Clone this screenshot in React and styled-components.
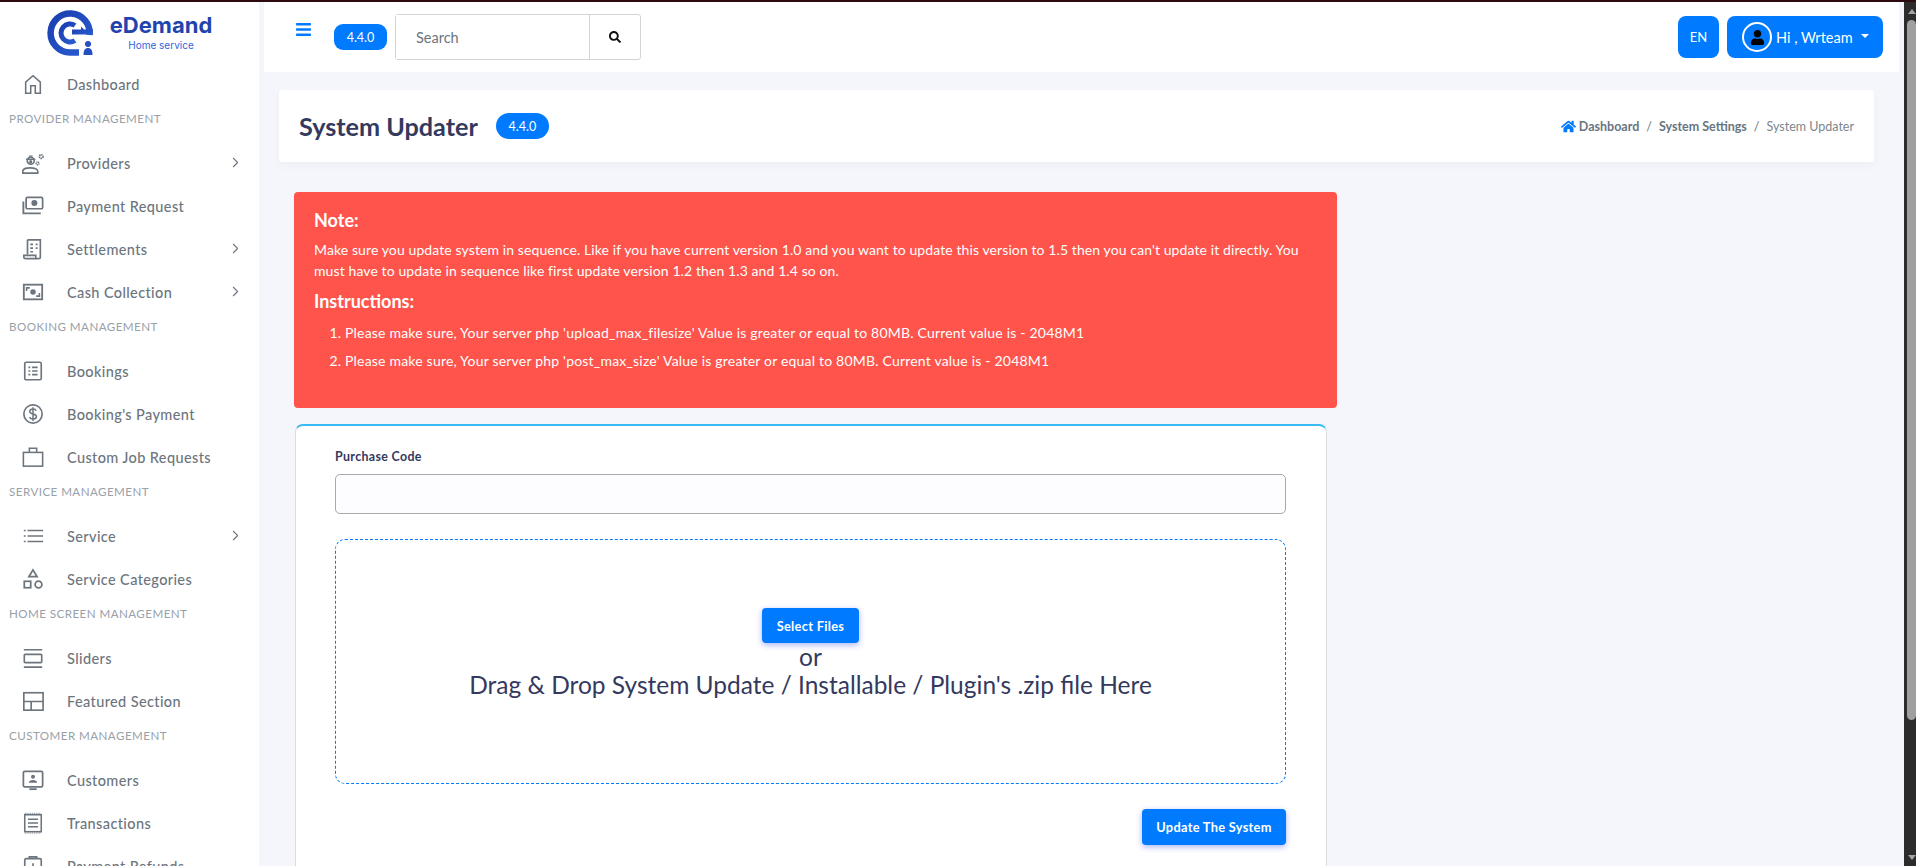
import React from "react";
import styled, { createGlobalStyle } from "styled-components";
import { ChevronRight } from "lucide-react";
import { FaBars, FaHome, FaSearch, FaUser } from "react-icons/fa";

const Global = createGlobalStyle`
html, body { margin: 0; height: 100%; overflow: hidden; }
body { font-family: Lato, "Open Sans", sans-serif; background: #f4f6fb; color: #34395e; }
* { box-sizing: border-box; }
`;

const stroke = { fill: "none", stroke: "currentColor", strokeWidth: 1.7 };

const HomeIcon = () => (
  <svg viewBox="0 0 24 24" {...stroke}><path d="M4 22V10l8-7 8 7v12h-5.500v-8h-5v8z" /></svg>
);
const ProvidersIcon = () => (
  <svg viewBox="0 0 24 24" {...stroke}>
    <circle cx="9.500" cy="9.500" r="3.800" strokeWidth="1.800" />
    <path d="M4.500 8h10M7.500 4.500h4" strokeWidth="1.600" />
    <circle cx="9.500" cy="10.500" r="1.700" fill="currentColor" stroke="none" />
    <path d="M.8 23v-2c0-2.300 3.500-3.700 8.200-3.700s8.200 1.400 8.200 3.700v2z" strokeWidth="1.800" />
    <circle cx="21" cy="5" r="2" strokeDasharray="1.500 .6" strokeWidth="1.800" />
    <circle cx="17" cy="12.500" r="1.500" strokeDasharray="1.200 .5" strokeWidth="1.600" />
  </svg>
);
const PaymentIcon = () => (
  <svg viewBox="0 0 24 24" {...stroke}>
    <rect x="4.500" y="2.500" width="18" height="12.500" rx="1.500" strokeWidth="1.900" />
    <circle cx="13.500" cy="8.700" r="3.300" fill="currentColor" stroke="none" />
    <path d="M1.500 7v13h19" strokeWidth="2" />
  </svg>
);
const SettlementIcon = () => (
  <svg viewBox="0 0 24 24" {...stroke}>
    <path d="M6 2h14v19c0 1-1 1.500-2 1.500H4c-1 0-2-.5-2-1.500v-2h13v3" strokeWidth="1.800" />
    <path d="M6 2v16M9 7h3M9 11h3M9 15h3M15 7h2M15 11h2" strokeWidth="1.800" />
  </svg>
);
const CashIcon = () => (
  <svg viewBox="0 0 24 24" {...stroke}>
    <rect x="2" y="4" width="20" height="16" strokeWidth="2" />
    <circle cx="12" cy="12" r="3" fill="currentColor" stroke="none" />
    <path d="M5 11V7.500h3.500M19 13v3.500h-3.500" />
  </svg>
);
const BookingIcon = () => (
  <svg viewBox="0 0 24 24" {...stroke}>
    <rect x="3" y="2.500" width="18" height="19" rx="1.500" strokeWidth="1.800" />
    <path d="M7 8h2M11 8h6M7 12h2M11 12h6M7 16h2M11 16h6" strokeWidth="1.800" />
  </svg>
);
const DollarIcon = () => (
  <svg viewBox="0 0 24 24" {...stroke}>
    <circle cx="12" cy="12" r="10" strokeWidth="1.800" />
    <path d="M15.500 8.500c-.5-1.500-2-2-3.500-2-2 0-3.500 1-3.500 2.700 0 3.800 7.200 1.800 7.200 5.500 0 1.700-1.700 2.700-3.700 2.700-1.700 0-3.200-.7-3.700-2.200M12 4.500v15" strokeWidth="1.600" />
  </svg>
);
const CaseIcon = () => (
  <svg viewBox="0 0 24 24" {...stroke}>
    <rect x="1.500" y="7" width="21" height="15" strokeWidth="1.700" />
    <path d="M8 7V2.500h8V7" strokeWidth="1.700" />
  </svg>
);
const ListIcon = () => (
  <svg viewBox="0 0 24 24" {...stroke}>
    <path d="M6 6h17M6 12h17M6 18h17" strokeWidth="1.800" />
    <path d="M2 6h2M2 12h2M2 18h2" strokeWidth="1.800" />
  </svg>
);
const ShapesIcon = () => (
  <svg viewBox="0 0 24 24" {...stroke}>
    <path d="M12 2l4.500 7.500h-9z" strokeWidth="1.900" />
    <rect x="2.500" y="14.500" width="7" height="7" strokeWidth="1.900" />
    <circle cx="18" cy="18" r="3.700" strokeWidth="1.900" />
  </svg>
);
const SliderIcon = () => (
  <svg viewBox="0 0 24 24" {...stroke}>
    <path d="M2 3h20M2 22h20" strokeWidth="1.800" />
    <rect x="2.500" y="8" width="19" height="9" rx="1" strokeWidth="1.800" />
  </svg>
);
const FeaturedIcon = () => (
  <svg viewBox="0 0 24 24" {...stroke}>
    <rect x="2" y="3" width="21" height="19" strokeWidth="1.800" />
    <path d="M2 12.500h21M10 12.500V22" strokeWidth="1.800" />
  </svg>
);
const CustomerIcon = () => (
  <svg viewBox="0 0 24 24" {...stroke}>
    <rect x="1.500" y="2.500" width="21" height="17" rx="1.500" strokeWidth="1.900" />
    <circle cx="12" cy="8.500" r="2.200" fill="currentColor" stroke="none" />
    <path d="M7.500 15c0-2 2-3 4.500-3s4.500 1 4.500 3z" fill="currentColor" stroke="none" />
    <path d="M8 22h8" strokeWidth="2" />
  </svg>
);
const ReceiptIcon = () => (
  <svg viewBox="0 0 24 24" {...stroke}>
    <rect x="3" y="3" width="18" height="18.500" strokeWidth="1.700" />
    <path d="M6.500 8h11M6.500 12h11M6.500 16h11" strokeWidth="1.700" />
    <path d="M3 1.500h18M3 23h18" strokeWidth="1" strokeDasharray="1 1" />
  </svg>
);
const RefundIcon = () => (
  <svg viewBox="0 0 24 24" {...stroke}>
    <rect x="3" y="4" width="18" height="18" rx="1.500" strokeWidth="1.800" />
    <path d="M8 4V2h8v2M12 9v8M8 13h8" strokeWidth="1.800" />
  </svg>
);

const menu = [
  { label: "Dashboard", icon: HomeIcon },
  { heading: "Provider Management" },
  { label: "Providers", icon: ProvidersIcon, sub: true },
  { label: "Payment Request", icon: PaymentIcon },
  { label: "Settlements", icon: SettlementIcon, sub: true },
  { label: "Cash Collection", icon: CashIcon, sub: true },
  { heading: "Booking Management" },
  { label: "Bookings", icon: BookingIcon },
  { label: "Booking's Payment", icon: DollarIcon },
  { label: "Custom Job Requests", icon: CaseIcon },
  { heading: "Service Management" },
  { label: "Service", icon: ListIcon, sub: true },
  { label: "Service Categories", icon: ShapesIcon },
  { heading: "Home Screen Management" },
  { label: "Sliders", icon: SliderIcon },
  { label: "Featured Section", icon: FeaturedIcon },
  { heading: "Customer Management" },
  { label: "Customers", icon: CustomerIcon },
  { label: "Transactions", icon: ReceiptIcon },
  { label: "Payment Refunds", icon: RefundIcon },
];

function LogoMark() {
  return (
    <svg width="46" height="46" viewBox="0 0 46 46">
      <defs>
        <linearGradient id="logoBlue" x1="0" y1="0" x2="1" y2="1">
          <stop offset="0" stopColor="#1a3eae" />
          <stop offset="1" stopColor="#2a5cd2" />
        </linearGradient>
      </defs>
      <path d="M42.500 25A19.500 19.500 0 1 0 23 42.500h9" fill="none" stroke="url(#logoBlue)" strokeWidth="6.500" />
      <path d="M28 15.500A9 9 0 1 0 28 30.500" fill="none" stroke="url(#logoBlue)" strokeWidth="5" />
      <path d="M25 19.500h9v-3l3 3h9v5H25z" fill="url(#logoBlue)" />
      <circle cx="41" cy="34" r="3" fill="#2450c0" />
      <path d="M36.500 45c0-5 1.500-7 4.500-7s4.500 2 4.500 7z" fill="#2450c0" />
    </svg>
  );
}

function Sidebar() {
  return (
    <Side>
      <Brand>
        <LogoMark />
        <BrandText>
          <BrandName>eDemand</BrandName>
          <BrandSub>Home service</BrandSub>
        </BrandText>
      </Brand>
      {menu.map((m) =>
        m.heading ? (
          <MenuHeading key={m.heading}>{m.heading}</MenuHeading>
        ) : (
          <MenuItem key={m.label}>
            <MenuIcon><m.icon /></MenuIcon>
            <MenuLabel>{m.label}</MenuLabel>
            {m.sub && <ChevronRight size={17} strokeWidth={1.500} />}
          </MenuItem>
        )
      )}
    </Side>
  );
}

function TopBar() {
  return (
    <Navbar>
      <Burger><FaBars size={17} /></Burger>
      <VersionPill>4.4.0</VersionPill>
      <SearchGroup>
        <SearchInput placeholder="Search" />
        <SearchBtn><FaSearch size={12} /></SearchBtn>
      </SearchGroup>
      <NavRight>
        <LangBtn>EN</LangBtn>
        <UserBtn>
          <Avatar><FaUser size={15} /></Avatar>
          Hi , Wrteam
          <Caret />
        </UserBtn>
      </NavRight>
    </Navbar>
  );
}

export default function App() {
  return (
    <>
      <Global />
      <Shell>
        <TopLine />
        <Frame>
          <Sidebar />
          <Page>
            <TopBar />
            <SectionHeader>
              <Title>System Updater</Title>
              <TitlePill>4.4.0</TitlePill>
              <Crumbs>
                <FaHome size={15} color="#007bff" />
                <Crumb $first>Dashboard</Crumb>
                <Sep>/</Sep>
                <Crumb>System Settings</Crumb>
                <Sep>/</Sep>
                <Crumb $muted>System Updater</Crumb>
              </Crumbs>
            </SectionHeader>
            <Body>
              <Alert>
                <AlertTitle>Note:</AlertTitle>
                <AlertText>
                  Make sure you update system in sequence. Like if you have current version 1.0 and you want to update this version to 1.5 then you can't update it directly. You must have to update in sequence like first update version 1.2 then 1.3 and 1.4 so on.
                </AlertText>
                <AlertTitle>Instructions:</AlertTitle>
                <AlertList>
                  <li>Please make sure, Your server php 'upload_max_filesize' Value is greater or equal to 80MB. Current value is - 2048M1</li>
                  <li>Please make sure, Your server php 'post_max_size' Value is greater or equal to 80MB. Current value is - 2048M1</li>
                </AlertList>
              </Alert>
              <Card>
                <FieldLabel>Purchase Code</FieldLabel>
                <CodeInput />
                <DropZone>
                  <PrimaryBtn>Select Files</PrimaryBtn>
                  <DropText>or</DropText>
                  <DropText>Drag &amp; Drop System Update / Installable / Plugin's .zip file Here</DropText>
                </DropZone>
                <CardFoot>
                  <PrimaryBtn $wide>Update The System</PrimaryBtn>
                </CardFoot>
              </Card>
            </Body>
          </Page>
          <ScrollRail>
            <RailArrow><ArrowUp /></RailArrow>
            <RailThumb />
            <RailArrow><ArrowDown /></RailArrow>
          </ScrollRail>
        </Frame>
      </Shell>
    </>
  );
}

const Shell = styled.div`
height: 100vh;
display: flex;
flex-direction: column;
overflow: hidden;
`;

const TopLine = styled.div`
height: 2px;
flex: none;
background: #2b0b0d;
`;

const Frame = styled.div`
flex: 1;
min-height: 0;
display: flex;
`;

const Side = styled.aside`
width: 259px;
flex: none;
margin-right: 5px;
background: #fff;
overflow: hidden;
`;

const Brand = styled.div`
height: 60px;
padding: 8px 0 0 47px;
display: flex;
gap: 17px;
`;

const BrandText = styled.div`
display: flex;
flex-direction: column;
align-items: center;
width: 102px;
`;

const BrandName = styled.div`
font-family: Inter, sans-serif;
font-size: 22px;
font-weight: 700;
line-height: 30px;
color: #1f44ad;
`;

const BrandSub = styled.div`
font-family: Inter, sans-serif;
font-size: 10px;
line-height: 16px;
margin-top: -3px;
color: #2f66dc;
`;

const MenuItem = styled.div`
height: 43px;
display: flex;
align-items: center;
padding: 0 15px 0 22px;
color: #6c757d;
`;

const MenuIcon = styled.span`
width: 22px;
height: 22px;
margin-right: 23px;
flex: none;
> svg { display: block; width: 100%; height: 100%; }
`;

const MenuLabel = styled.span`
flex: 1;
padding-top: 1px;
font-size: 14.5px;
font-weight: 500;
letter-spacing: 0.38px;
`;

const MenuHeading = styled.div`
height: 36px;
padding: 7px 0 0 9px;
font-size: 11.6px;
line-height: 14px;
letter-spacing: 0.45px;
text-transform: uppercase;
color: #98a0a8;
`;

const Page = styled.main`
flex: 1;
min-width: 0;
overflow: hidden;
`;

const ScrollRail = styled.div`
width: 12px;
flex: none;
display: flex;
flex-direction: column;
padding-left: 3px;
background: #2c2c2c;
`;

const RailArrow = styled.div`
height: 18px;
flex: none;
display: flex;
align-items: center;
justify-content: center;
`;

const ArrowUp = styled.span`
border-bottom: 5px solid #a3a3a3;
border-left: 4.5px solid transparent;
border-right: 4.5px solid transparent;
`;

const ArrowDown = styled(ArrowUp)`
border-bottom: 0;
border-top: 5px solid #a3a3a3;
`;

const RailThumb = styled.div`
height: 700px;
margin-bottom: auto;
background: #9f9f9f;
border-radius: 5px;
`;

const Navbar = styled.header`
height: 70px;
margin-right: 5px;
background: #fff;
display: flex;
align-items: center;
padding: 0 16px 0 31px;
`;

const Burger = styled.span`
display: flex;
color: #007bff;
margin: -16px 22px 0 0;
`;

const VersionPill = styled.span`
width: 53px;
height: 26px;
margin-right: 8px;
display: flex;
align-items: center;
justify-content: center;
background: #007bff;
color: #fff;
font-size: 12.5px;
border-radius: 9px;
`;

const SearchGroup = styled.div`
width: 246px;
height: 46px;
display: flex;
background: #fff;
border: 1px solid #d4d4d4;
border-radius: 3px;
`;

const SearchInput = styled.input`
flex: 1;
min-width: 0;
border: 0;
outline: 0;
padding: 0 20px;
font: 14.5px Lato, sans-serif;
&::placeholder { color: #6c757d; }
`;

const SearchBtn = styled.span`
width: 51px;
flex: none;
display: flex;
align-items: center;
justify-content: center;
color: #111;
border-left: 1px solid #d4d4d4;
`;

const NavRight = styled.div`
margin-left: auto;
display: flex;
gap: 8px;
`;

const LangBtn = styled.span`
width: 41px;
height: 42px;
display: flex;
align-items: center;
justify-content: center;
background: #007bff;
color: #fff;
font-size: 13px;
border-radius: 8px;
`;

const UserBtn = styled.span`
width: 156px;
height: 42px;
padding-left: 15px;
display: flex;
align-items: center;
gap: 4px;
background: #007bff;
color: #fff;
font-size: 14.5px;
border-radius: 8px;
`;

const Avatar = styled.span`
width: 30px;
height: 30px;
display: flex;
align-items: center;
justify-content: center;
border: 2px solid #fff;
border-radius: 50%;
color: #000;
`;

const Caret = styled.span`
margin-left: 4px;
margin-top: -3px;
border-top: 4.5px solid #fff;
border-left: 4.5px solid transparent;
border-right: 4.5px solid transparent;
`;

const SectionHeader = styled.section`
height: 72px;
margin: 18px 30px 0 15px;
padding: 0 20px;
display: flex;
align-items: center;
background: #fff;
border-radius: 3px;
box-shadow: 0 4px 8px rgba(0, 0, 0, 0.03);
`;

const Title = styled.h1`
margin: 0 18px 0 0;
font-size: 25.2px;
font-weight: 700;
color: #34395e;
`;

const TitlePill = styled.span`
width: 53px;
height: 26px;
display: flex;
align-items: center;
justify-content: center;
background: #007bff;
color: #fff;
font-size: 12.5px;
border-radius: 13px;
`;

const Crumbs = styled.nav`
margin-left: auto;
display: flex;
align-items: center;
font-size: 12.5px;
`;

const Crumb = styled.span`
color: ${(p) => (p.$muted ? "#7c858d" : "#6a7580")};
margin-left: ${(p) => (p.$first ? "3px" : "0")};
font-weight: ${(p) => (p.$muted ? 400 : 700)};
`;

const Sep = styled.span`
margin: 0 7px;
color: #6c757d;
`;

const Body = styled.div`
padding: 30px 0 0 30px;
`;

const Alert = styled.div`
width: 1043px;
height: 216px;
margin-bottom: 16px;
padding: 15px 20px;
background: #fe544b;
color: #fff;
border-radius: 4px;
`;

const AlertTitle = styled.h4`
margin: 0;
font-size: 18px;
line-height: 26px;
font-weight: 700;
`;

const AlertText = styled.p`
margin: 6px 0 7px;
font-size: 14px;
line-height: 21px;
letter-spacing: 0.1px;
`;

const AlertList = styled.ol`
margin: 5px 0 0;
padding-left: 31px;
font-size: 14px;
letter-spacing: 0.2px;
line-height: 28px;
`;

const Card = styled.div`
width: 1032px;
margin-left: 1px;
padding: 22px 40px 40px 39px;
background: #fff;
border: 1px solid #dcdcdc;
border-top: 2px solid #3abaf4;
border-radius: 8px;
`;

const FieldLabel = styled.label`
display: block;
height: 26px;
font-size: 12.4px;
line-height: 18px;
font-weight: 700;
letter-spacing: 0.35px;
color: #34395e;
`;

const CodeInput = styled.input`
display: block;
width: 100%;
height: 40px;
background: #fdfdff;
border: 1px solid #a9a9a9;
border-radius: 5px;
outline: 0;
`;

const DropZone = styled.div`
height: 245px;
margin-top: 25px;
padding-bottom: 16px;
display: flex;
flex-direction: column;
align-items: center;
justify-content: center;
border: 1px dashed #007bff;
border-radius: 10px;
`;

const PrimaryBtn = styled.button`
width: ${(p) => (p.$wide ? "144px" : "97px")};
height: ${(p) => (p.$wide ? "36px" : "35px")};
flex: none;
border: 0;
border-radius: 4px;
background: #007bff;
color: #fff;
font: 700 12.8px Lato, sans-serif;
letter-spacing: 0.3px;
box-shadow: 0 2px 6px #acb5f6;
`;

const DropText = styled.div`
font-size: 24.5px;
line-height: 28px;
color: #34395e;
`;

const CardFoot = styled.div`
margin-top: 25px;
display: flex;
justify-content: flex-end;
`;
